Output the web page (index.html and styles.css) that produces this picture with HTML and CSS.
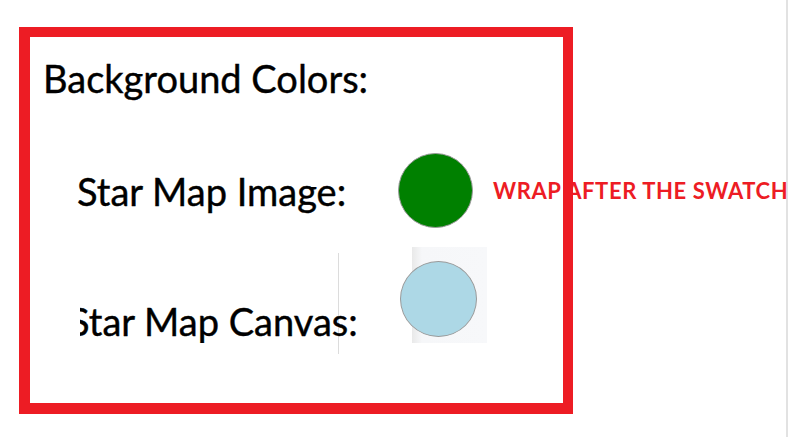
FILE: index.html
```html
<!DOCTYPE html>
<html lang="en">
<head>
<meta charset="utf-8">
<title>Background Colors</title>
<link rel="stylesheet" href="styles.css">
</head>
<body>
<div class="page">
  <div class="canvas">
    <section class="box">
      <h2 class="heading">Background Colors:</h2>
      <div class="row row-image">
        <span class="label">Star Map Image:</span>
        <span class="swatch swatch-green"></span>
        <span class="note">WRAP AFTER THE SWATCH</span>
      </div>
      <div class="row row-canvas">
        <span class="label-clip"><span class="label-text">Star Map Canvas:</span></span>
        <span class="divider"></span>
        <span class="swatch-frame"><span class="swatch swatch-blue"></span></span>
      </div>
    </section>
  </div>
</div>
</body>
</html>
```

FILE: styles.css
```css
html, body {
  margin: 0;
  padding: 0;
  background: #ffffff;
}

body {
  font-family: Lato, "Liberation Sans", sans-serif;
  color: #000000;
}

.page {
  display: flex;
  width: 807px;
  height: 437px;
  overflow: hidden;
}

.canvas {
  width: 788px;
  height: 437px;
  border-right: 2px solid #e2e2e2;
  padding: 27px 0 0 19px;
  box-sizing: border-box;
}

.box {
  width: 554px;
  height: 387px;
  box-sizing: border-box;
  border-style: solid;
  border-color: #ed1c24;
  border-width: 10px 10px 11px 11px;
  padding: 19px 0 0 13px;
  display: flex;
  flex-direction: column;
}

.heading {
  margin: 0;
  font-size: 38px;
  line-height: 44px;
  font-weight: 400;
  white-space: nowrap;
  -webkit-text-stroke: 0.4px #000;
}

.row {
  display: flex;
}

.row-image {
  align-items: center;
  margin-top: 53px;
  height: 75px;
}

.label {
  margin-left: 34px;
  width: 321px;
  flex: none;
  font-size: 38px;
  line-height: 44px;
  white-space: nowrap;
  -webkit-text-stroke: 0.4px #000;
}

.swatch {
  display: block;
  flex: none;
  width: 75px;
  height: 75px;
  border-radius: 50%;
  border: 1px solid #9a9a9a;
  box-sizing: border-box;
}

.swatch-green {
  background: #008000;
}

.note {
  margin-left: 20px;
  font-size: 22px;
  font-weight: 700;
  letter-spacing: 0.6px;
  line-height: 26px;
  color: #ed1c24;
  white-space: nowrap;
}

.row-canvas {
  align-items: flex-start;
  margin-top: 19px;
  height: 96px;
}

.label-clip {
  display: block;
  flex: none;
  margin-left: 37px;
  margin-top: 52px;
  width: 258px;
  clip-path: inset(0 -200px 0 0);
  font-size: 38px;
  line-height: 44px;
  white-space: nowrap;
  -webkit-text-stroke: 0.4px #000;
}

.label-text {
  display: block;
  margin-left: -11px;
}

.divider {
  display: block;
  flex: none;
  width: 1px;
  height: 101px;
  margin-top: 6px;
  background: #dcdcdc;
}

.swatch-frame {
  display: flex;
  flex: none;
  margin-left: 73px;
  width: 75px;
  height: 96px;
  background: linear-gradient(to right, #e9e9e9, #f6f7f9 10px, #f7f8fa);
}

.swatch-blue {
  width: 77px;
  height: 76px;
  margin-left: -12px;
  margin-top: 14px;
  background: #add8e6;
}
```
